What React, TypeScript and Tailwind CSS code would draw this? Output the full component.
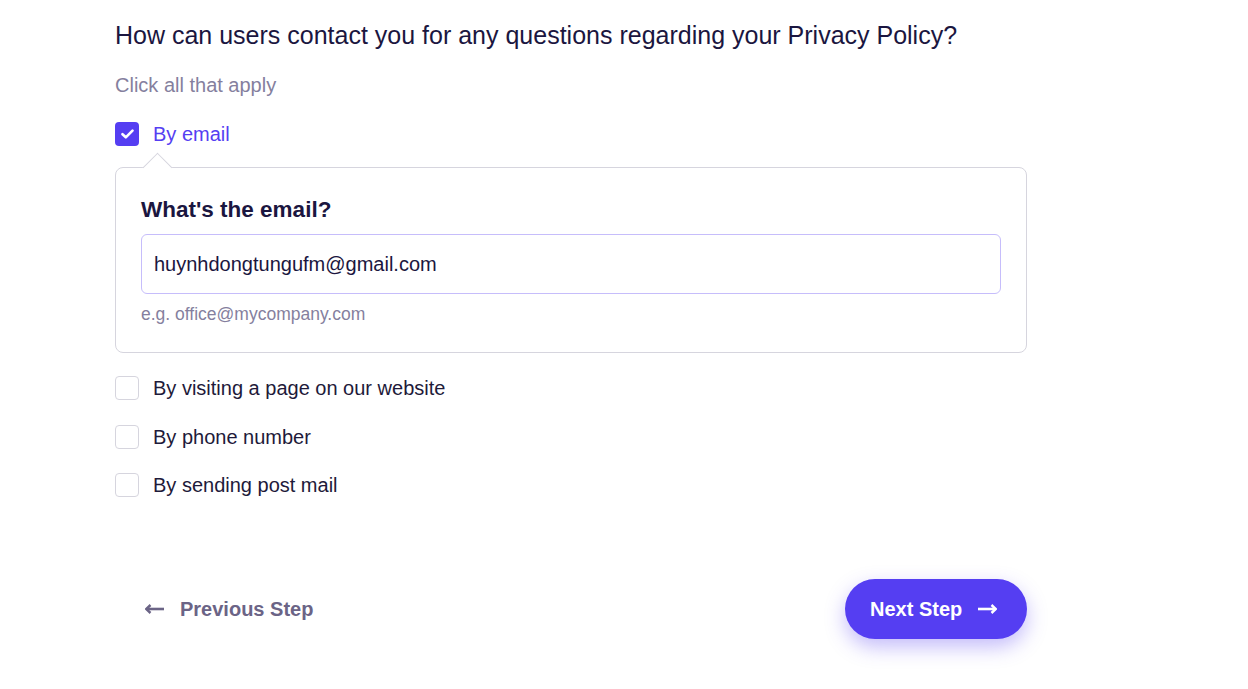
import React, { useState } from 'react';

const options = [
  'By visiting a page on our website',
  'By phone number',
  'By sending post mail',
];

const ArrowLeft: React.FC = () => (
  <svg width="20" height="10" viewBox="0 0 20 10" fill="none">
    <path d="M19 5H2" stroke="currentColor" strokeWidth="2.6" />
    <path d="M5.5 1L1.2 5l4.3 4" stroke="currentColor" strokeWidth="2.4" strokeLinejoin="miter" />
  </svg>
);

const ArrowRight: React.FC = () => (
  <svg width="20" height="10" viewBox="0 0 20 10" fill="none">
    <path d="M1 5h17" stroke="currentColor" strokeWidth="2.6" />
    <path d="M14.5 1l4.3 4-4.3 4" stroke="currentColor" strokeWidth="2.4" strokeLinejoin="miter" />
  </svg>
);

export default function App() {
  const [email, setEmail] = useState('huynhdongtungufm@gmail.com');

  return (
    <div className="min-h-screen bg-white font-['Liberation_Sans',Arial,sans-serif]">
      <div className="w-[912px] ml-[115px] pt-[19px]">
        <h2 className="text-[25px] leading-[32px] text-[#1b1640]">
          How can users contact you for any questions regarding your Privacy Policy?
        </h2>
        <p className="mt-[20px] text-[20px] leading-[28px] text-[#857f9e]">Click all that apply</p>

        {/* checked option */}
        <label className="mt-[23px] flex items-center gap-[14px] h-[24px] cursor-pointer">
          <span className="w-[24px] h-[24px] rounded-[4px] bg-[#553ef2] flex items-center justify-center">
            <svg width="13" height="10" viewBox="0 0 13 10" fill="none">
              <path d="M1.5 5.2l3.3 3.1L11.5 1.6" stroke="white" strokeWidth="2.6" strokeLinecap="round" strokeLinejoin="round" />
            </svg>
          </span>
          <span className="text-[20px] text-[#553ef2]">By email</span>
        </label>

        <div className="relative mt-[21px] border border-[#d6d5de] rounded-[8px] pl-[25px] pr-[25px] pt-[28px] pb-[26px]">
          {/* notch */}
          <span className="absolute -top-[11px] left-[31px] w-[21px] h-[21px] rotate-45 bg-white border-l border-t border-[#d6d5de]" />
          <h3 className="relative text-[22.5px] leading-[28px] font-bold text-[#1b1640]">What's the email?</h3>
          <input
            value={email}
            onChange={e => setEmail(e.target.value)}
            className="relative mt-[10px] block w-full h-[60px] px-[12px] text-[20px] text-[#1b1640] border border-[#c6bdfb] rounded-[6px] outline-none"
          />
          <p className="mt-[8px] text-[17.5px] leading-[24px] text-[#857f9e]">e.g. office@mycompany.com</p>
        </div>

        <div className="mt-[23px] flex flex-col gap-[24.5px]">
          {options.map(o => (
            <label key={o} className="flex items-center gap-[14px] h-[24px] cursor-pointer">
              <span className="w-[24px] h-[24px] rounded-[4px] border border-[#d6d5de] bg-white" />
              <span className="text-[20px] text-[#1e1a3a]">{o}</span>
            </label>
          ))}
        </div>

        <div className="mt-[82px] flex items-center justify-between">
          <button className="h-[60px] pl-[30px] pr-[30px] flex items-center gap-[15px] text-[20px] font-bold text-[#6b6486]">
            <ArrowLeft />
            Previous Step
          </button>
          <button className="h-[60px] w-[182px] pl-[25px] rounded-full bg-[#553ef2] text-white text-[20px] font-bold flex items-center gap-[15px] shadow-[0_8px_20px_rgba(85,62,242,0.35)]">
            Next Step
            <ArrowRight />
          </button>
        </div>
      </div>
    </div>
  );
}
